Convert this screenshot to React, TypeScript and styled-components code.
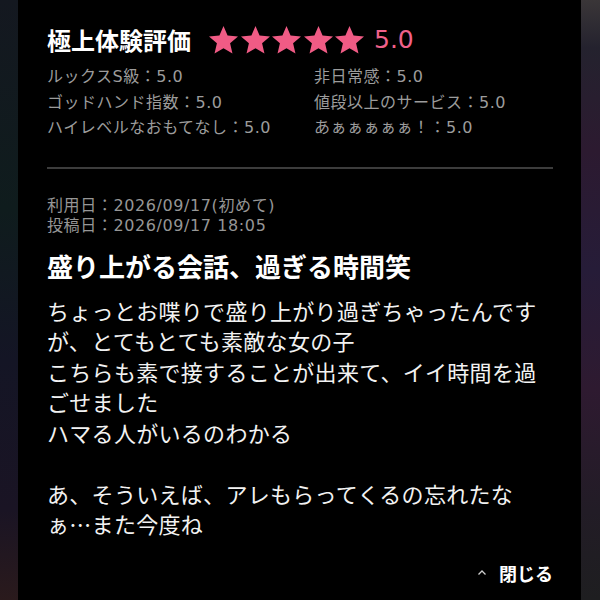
import React from "react"
import styled, { createGlobalStyle } from "styled-components"

const GlobalStyle = createGlobalStyle`
  html, body {
    margin: 0;
    padding: 0;
    height: 600px;
    overflow: hidden;
    background: #000;
  }
  body {
    font-family: "Noto Sans CJK JP", "Noto Sans", sans-serif;
    -webkit-font-smoothing: antialiased;
  }
`

// latin glyphs in the reference are wide (Hiragino-like), DejaVu gets close
const mixedFont = `"DejaVu Sans", "Noto Sans CJK JP", sans-serif`

const scores = [
  { label: "ルックスS級", value: "5.0" },
  { label: "非日常感", value: "5.0" },
  { label: "ゴッドハンド指数", value: "5.0" },
  { label: "値段以上のサービス", value: "5.0" },
  { label: "ハイレベルなおもてなし", value: "5.0" },
  { label: "あぁぁぁぁぁ！", value: "5.0" },
]

const body = `ちょっとお喋りで盛り上がり過ぎちゃったんですが、とてもとても素敵な女の子
こちらも素で接することが出来て、イイ時間を過ごせました
ハマる人がいるのわかる

あ、そういえば、アレもらってくるの忘れたなぁ…また今度ね`

const Star = () => (
  <StarIcon viewBox="2 2 20 19.3">
    <path d="M12 17.27L18.18 21l-1.64-7.03L22 9.24l-7.19-.61L12 2 9.19 8.63 2 9.24l5.46 4.73L5.82 21z" />
  </StarIcon>
)

const App = () => {
  return (
    <>
      <GlobalStyle />
      <Page>
        <Card>
          <Header>
            <Title>極上体験評価</Title>
            <Stars>
              {[0, 1, 2, 3, 4].map((i) => (
                <Star key={i} />
              ))}
            </Stars>
            <Total>5.0</Total>
          </Header>

          <ScoreGrid>
            {scores.map((s) => (
              <ScoreItem key={s.label}>
                {s.label}：{s.value}
              </ScoreItem>
            ))}
          </ScoreGrid>

          <Divider />

          <Dates>
            <div>利用日：2026/09/17(初めて)</div>
            <div>投稿日：2026/09/17 18:05</div>
          </Dates>

          <ReviewTitle>盛り上がる会話、過ぎる時間笑</ReviewTitle>
          <ReviewBody>{body}</ReviewBody>

          <Footer>
            <CloseButton type="button">
              <svg width="10" height="7" viewBox="0 0 10 7">
                <polyline points="1.5,5.5 5,2 8.5,5.5" fill="none" stroke="#cfcfcf" strokeWidth="1.3" />
              </svg>
              閉じる
            </CloseButton>
          </Footer>
        </Card>
      </Page>
    </>
  )
}

export default App

const Page = styled.div`
  height: 600px;
  display: flex;
  background:
    linear-gradient(180deg, #141820 0%, #0f1c1d 35%, #141525 60%, #1a1424 85%, #2a1a1c 100%) left / 18px 100% no-repeat,
    linear-gradient(180deg, #3a3638 0%, #24222e 8%, #2c1a30 25%, #261c38 45%, #2e1a30 65%, #221c26 85%, #1e1e20 100%) right / 19px 100% no-repeat,
    #000;
`

const Card = styled.div`
  width: 563px;
  margin-left: 18px;
  background: #000;
  box-sizing: border-box;
  padding: 24px 28px 0 29px;
  color: #fff;
`

const Header = styled.div`
  display: flex;
  align-items: center;
  height: 32px;
`

const Title = styled.h2`
  margin: 0;
  font-size: 24px;
  line-height: 32px;
  font-weight: 700;
  color: #fff;
`

const Stars = styled.div`
  display: flex;
  gap: 2.5px;
  margin-left: 18px;
`

const StarIcon = styled.svg`
  width: 29px;
  height: 28px;
  fill: #f05b85;
`

const Total = styled.span`
  margin-left: 10px;
  font-family: ${mixedFont};
  font-size: 25px;
  line-height: 32px;
  color: #f0618a;
`

const ScoreGrid = styled.div`
  display: grid;
  grid-template-columns: 267px 1fr;
  margin-top: 8px;
`

const ScoreItem = styled.div`
  font-family: ${mixedFont};
  font-size: 16px;
  letter-spacing: 0.5px;
  line-height: 25.5px;
  color: #9c9c9c;
  white-space: nowrap;
`

const Divider = styled.hr`
  margin: 26px 0 0;
  border: none;
  height: 2px;
  background: #3c3c3c;
`

const Dates = styled.div`
  margin-top: 27px;
  font-family: ${mixedFont};
  font-size: 16px;
  letter-spacing: 0.6px;
  line-height: 20px;
  color: #969696;
`

const ReviewTitle = styled.h3`
  margin: 13px 0 0;
  font-size: 26px;
  line-height: 34px;
  font-weight: 700;
  color: #fff;
`

const ReviewBody = styled.p`
  margin: 12px 0 0;
  font-size: 22px;
  letter-spacing: 0.3px;
  line-height: 30.5px;
  color: #f2f2f2;
  white-space: pre-wrap;
`

const Footer = styled.div`
  display: flex;
  justify-content: flex-end;
  margin-top: 22px;
`

const CloseButton = styled.button`
  display: flex;
  align-items: center;
  gap: 12px;
  padding: 0;
  border: none;
  background: none;
  font-family: inherit;
  font-size: 18px;
  line-height: 24px;
  font-weight: 700;
  color: #fff;
  cursor: pointer;
`
